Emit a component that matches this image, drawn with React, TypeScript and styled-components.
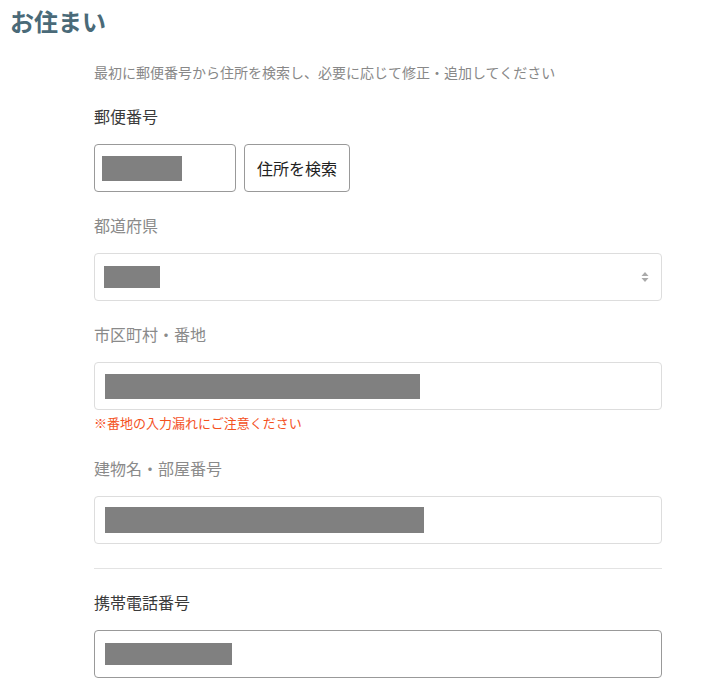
import React from "react";
import styled, { createGlobalStyle } from "styled-components";

const GlobalStyle = createGlobalStyle`
  html, body { margin: 0; padding: 0; background: #fff; }
  body { font-family: "Noto Sans CJK JP", "Noto Sans", sans-serif; color: #333; }
  * { box-sizing: border-box; }
`;

const Page = styled.div`
  padding: 3px 0 0 10px;
`;

const Heading = styled.h2`
  margin: 0;
  font-size: 24px;
  line-height: 36px;
  font-weight: 700;
  color: #4a6a78;
`;

const Content = styled.div`
  margin-left: 84px;
  width: 568px;
  display: flex;
  flex-direction: column;
  gap: 21px;
`;

const Description = styled.p`
  margin: 23px 0 1px;
  font-size: 14px;
  line-height: 20px;
  color: #888;
`;

const Field = styled.div`
  display: flex;
  flex-direction: column;
  gap: 16px;
`;

const Label = styled.div<{ $muted?: boolean }>`
  font-size: 16px;
  line-height: 24px;
  color: ${(p) => (p.$muted ? "#8a8a8a" : "#3a3a3a")};
`;

const Row = styled.div`
  display: flex;
  gap: 8px;
`;

const Box = styled.div<{ $width?: string; $active?: boolean; $pad?: number }>`
  position: relative;
  width: ${(p) => p.$width ?? "100%"};
  height: 48px;
  border: 1px solid ${(p) => (p.$active ? "#999" : "#ddd")};
  border-radius: 4px;
  background: #fff;
  display: flex;
  align-items: center;
  padding-left: ${(p) => p.$pad ?? 10}px;
`;

const Redacted = styled.span<{ $w: number; $h: number }>`
  display: block;
  width: ${(p) => p.$w}px;
  height: ${(p) => p.$h}px;
  background: #808080;
`;

const Button = styled.button`
  height: 48px;
  padding: 0 12px;
  border: 1px solid #999;
  border-radius: 4px;
  background: #fff;
  font-family: inherit;
  font-size: 16px;
  color: #222;
`;

const Arrows = styled.svg`
  position: absolute;
  right: 12px;
  top: 50%;
  transform: translateY(-50%);
`;

const Note = styled.div`
  margin: -17px 0 3px;
  font-size: 13px;
  line-height: 18px;
  color: #f4511e;
`;

const Divider = styled.hr`
  margin: 3px 0 0;
  border: 0;
  border-top: 1px solid #e3e3e3;
`;

export default function App() {
  return (
    <>
      <GlobalStyle />
      <Page>
        <Heading>お住まい</Heading>
        <Content>
          <Description>最初に郵便番号から住所を検索し、必要に応じて修正・追加してください</Description>
          <Field>
            <Label>郵便番号</Label>
            <Row>
              <Box $width="142px" $active $pad={7}>
                <Redacted $w={80} $h={25} />
              </Box>
              <Button>住所を検索</Button>
            </Row>
          </Field>
          <Field>
            <Label $muted>都道府県</Label>
            <Box $pad={9}>
              <Redacted $w={56} $h={22} />
              <Arrows width="8" height="10" viewBox="0 0 8 10">
                <path d="M4 0 L7.5 4 H0.5 Z M4 10 L7.5 6 H0.5 Z" fill="#aaa" />
              </Arrows>
            </Box>
          </Field>
          <Field>
            <Label $muted>市区町村・番地</Label>
            <Box>
              <Redacted $w={315} $h={25} />
            </Box>
          </Field>
          <Note>※番地の入力漏れにご注意ください</Note>
          <Field>
            <Label $muted>建物名・部屋番号</Label>
            <Box>
              <Redacted $w={319} $h={26} />
            </Box>
          </Field>
          <Divider />
          <Field>
            <Label>携帯電話番号</Label>
            <Box $active>
              <Redacted $w={127} $h={22} />
            </Box>
          </Field>
        </Content>
      </Page>
    </>
  );
}
